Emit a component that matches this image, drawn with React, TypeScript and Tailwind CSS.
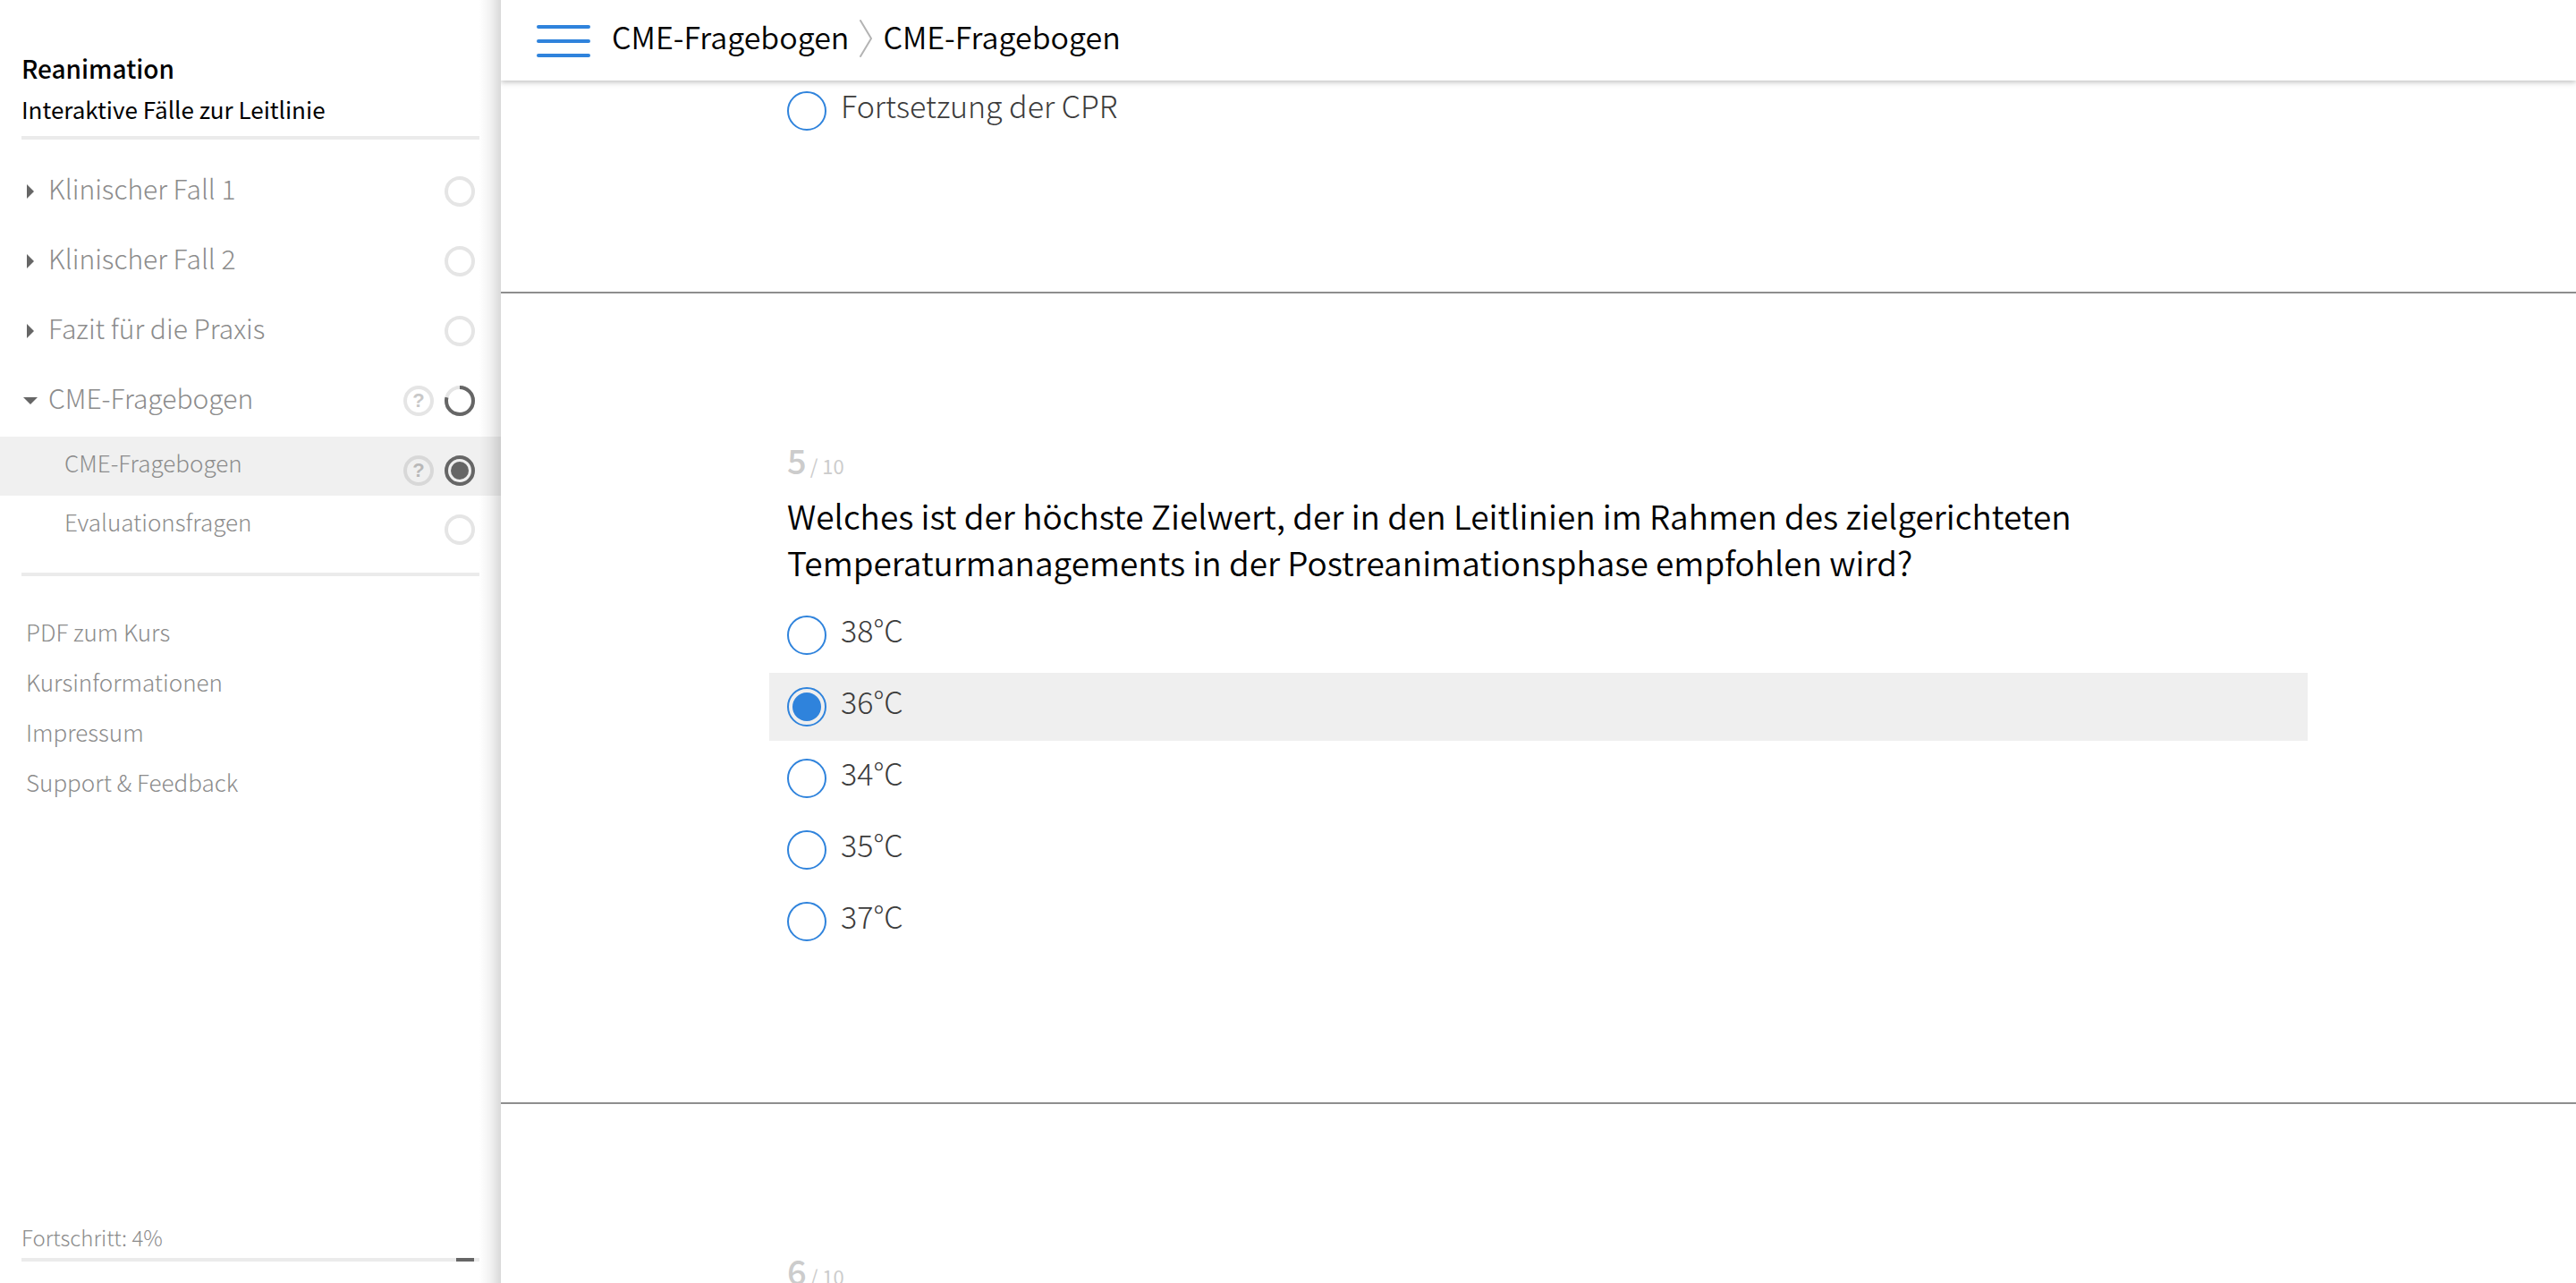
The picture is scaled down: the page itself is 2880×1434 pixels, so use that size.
import React, { useState } from "react";

type Status = "open" | "partial" | "current";

function StatusRing({ status }: { status: Status }) {
  return (
    <svg className="size-[34px] shrink-0" viewBox="0 0 34 34" fill="none" aria-hidden="true">
      <circle cx="17" cy="17" r="15" strokeWidth="4" className={status === "current" ? "stroke-[#666666]" : "stroke-[#e5e5e5]"} />
      {status === "partial" && (
        <circle cx="17" cy="17" r="15" strokeWidth="4" pathLength="100" strokeDasharray="79 100" transform="rotate(-90 17 17)" className="stroke-[#666666]" />
      )}
      {status === "current" && <circle cx="17" cy="17" r="10" className="fill-[#666666]" />}
    </svg>
  );
}

function HelpBadge({ active = false }: { active?: boolean }) {
  return (
    <span
      className={`flex size-[34px] shrink-0 items-center justify-center rounded-full border-4 font-['Liberation_Sans',sans-serif] text-[22px] font-bold leading-none ${
        active ? "border-[#d8d8d8] text-[#b8b8b8]" : "border-[#e5e5e5] text-[#c8c8c8]"
      }`}
    >
      ?
    </span>
  );
}

function Caret({ open }: { open: boolean }) {
  return (
    <svg className="size-4 shrink-0 fill-[#666666]" viewBox="0 0 16 16" aria-hidden="true">
      {open ? <path d="M0 4h16L8 12z" /> : <path d="M4 0v16l8-8z" />}
    </svg>
  );
}

function ChapterRow({ label, status = "open", open = false, help = false }: { label: string; status?: Status; open?: boolean; help?: boolean }) {
  return (
    <button type="button" aria-expanded={open} className="flex h-[78px] w-full items-center pl-[26px] pr-[29px] text-left">
      <Caret open={open} />
      <span className="ml-3 flex-1 pb-2 text-[30px] leading-9">{label}</span>
      <span className="flex gap-3">
        {help && <HelpBadge />}
        <StatusRing status={status} />
      </span>
    </button>
  );
}

function PageRow({ label, active = false }: { label: string; active?: boolean }) {
  return (
    <a href="#" className={`flex h-[66px] items-center pl-[72px] pr-[29px] ${active ? "bg-[#f0f0f0]" : ""}`}>
      <span className="flex-1 pb-2 text-[26px] leading-8">{label}</span>
      <span className="flex gap-3 pt-[10px]">
        {active && <HelpBadge active />}
        <StatusRing status={active ? "current" : "open"} />
      </span>
    </a>
  );
}

function Sidebar() {
  return (
    <aside className="relative flex w-[560px] shrink-0 flex-col font-light text-[#8c8c8c]">
      <header className="mx-6 border-b-4 border-[#ebebeb] pb-2 pt-[54px] text-black">
        <h1 className="text-[28px] font-medium leading-[44px]">Reanimation</h1>
        <p className="pt-[2px] text-[26px] font-normal leading-[44px]">Interaktive Fälle zur Leitlinie</p>
      </header>
      <nav aria-label="Kapitel" className="pt-[19px]">
        <ChapterRow label="Klinischer Fall 1" />
        <ChapterRow label="Klinischer Fall 2" />
        <ChapterRow label="Fazit für die Praxis" />
        <ChapterRow label="CME-Fragebogen" open help status="partial" />
        <div className="mt-px">
          <PageRow label="CME-Fragebogen" active />
          <PageRow label="Evaluationsfragen" />
        </div>
      </nav>
      <hr className="mx-6 mt-5 border-t-4 border-[#ebebeb]" />
      <ul className="mt-[34px] pl-[29px] text-[26px] leading-[56px]">
        {["PDF zum Kurs", "Kursinformationen", "Impressum", "Support & Feedback"].map((t) => (
          <li key={t}>
            <a href="#">{t}</a>
          </li>
        ))}
      </ul>
      <footer className="mx-6 mb-6 mt-auto">
        <p className="text-2xl leading-[46px]">Fortschritt: 4%</p>
        <div className="flex h-1 justify-end bg-[#ebebeb] pr-[6px]">
          <div className="w-5 bg-[#666666]" />
        </div>
      </footer>
      <div className="pointer-events-none absolute inset-y-0 right-0 w-6 bg-linear-to-r from-black/0 via-black/5 to-black/15" />
    </aside>
  );
}

function Option({ name, label, checked, onSelect }: { name: string; label: string; checked: boolean; onSelect: () => void }) {
  return (
    <label className={`flex h-[76px] items-center gap-4 px-5 ${checked ? "bg-[#efefef]" : ""}`}>
      <input
        type="radio"
        name={name}
        checked={checked}
        onChange={onSelect}
        className="size-11 shrink-0 appearance-none rounded-full border-2 border-[#2f83dc] bg-clip-content p-1 checked:bg-[#2f83dc]"
      />
      <span className="pb-3 text-[34px] font-light leading-10 text-[#3c3c3c]">{label}</span>
    </label>
  );
}

function Counter({ n }: { n: number }) {
  return (
    <p className="flex items-baseline gap-1 px-5 font-normal text-[#cccccc]">
      <span className="text-[38px] font-medium leading-[52px]">{n}</span>
      <span className="text-[22px] leading-none">/ 10</span>
    </p>
  );
}

const answers = ["38°C", "36°C", "34°C", "35°C", "37°C"];

export default function App() {
  const [answer, setAnswer] = useState("36°C");
  const [previous, setPrevious] = useState("");
  return (
    <div className="flex h-screen overflow-hidden bg-white font-['Noto_Sans_CJK_SC','Noto_Sans',sans-serif] font-[350]">
      <Sidebar />
      <div className="flex min-w-0 flex-1 flex-col">
        <header className="relative z-10 flex h-[90px] shrink-0 items-center bg-white pl-10 shadow-[0_2px_6px_rgba(0,0,0,0.25)] [clip-path:inset(0_0_-12px_0)]">
          <button type="button" aria-label="Menü" className="flex flex-col gap-3 pt-[2px]">
            <span className="h-1 w-[60px] rounded-full bg-[#2f83dc]" />
            <span className="h-1 w-[60px] rounded-full bg-[#2f83dc]" />
            <span className="h-1 w-[60px] rounded-full bg-[#2f83dc]" />
          </button>
          <nav aria-label="Brotkrumen" className="ml-6 flex items-center gap-3 pb-1 text-[34px] leading-[52px] text-black">
            <a href="#" className="pb-1">CME-Fragebogen</a>
            <svg className="h-[42px] w-[14px] stroke-[#b3b3b3]" viewBox="0 0 14 42" fill="none" aria-hidden="true">
              <path d="M1 1l12 20L1 41" strokeWidth="2" strokeLinecap="round" strokeLinejoin="round" />
            </svg>
            <a href="#" className="pb-1">CME-Fragebogen</a>
          </nav>
        </header>
        <main className="min-h-0 flex-1 overflow-hidden">
          <section className="-mt-1 border-b-2 border-[#8e8e8e] px-[300px] pb-[164px]">
            <Option name="q4" label="Fortsetzung der CPR" checked={previous === "cpr"} onSelect={() => setPrevious("cpr")} />
          </section>
          <section className="border-b-2 border-[#8e8e8e] px-[300px] pb-[164px] pt-40">
            <Counter n={5} />
            <fieldset className="mt-[10px]">
              <legend className="max-w-[1500px] px-5 text-[37px] leading-[52px] text-black">
                Welches ist der höchste Zielwert, der in den Leitlinien im Rahmen des zielgerichteten Temperaturmanagements in der Postreanimationsphase empfohlen wird?
              </legend>
              <div className="mt-[18px] flex flex-col gap-1">
                {answers.map((a) => (
                  <Option key={a} name="q5" label={a} checked={answer === a} onSelect={() => setAnswer(a)} />
                ))}
              </div>
            </fieldset>
          </section>
          <section className="px-[300px] pt-40">
            <Counter n={6} />
          </section>
        </main>
      </div>
    </div>
  );
}
